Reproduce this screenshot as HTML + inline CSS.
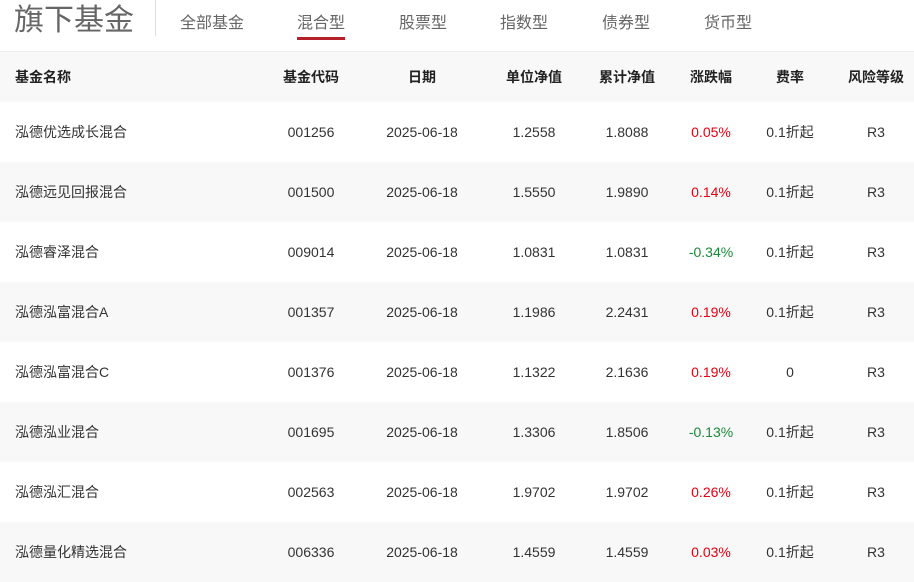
<!DOCTYPE html>
<html><head><meta charset="utf-8"><style>
*{margin:0;padding:0;box-sizing:border-box}
body{width:914px;height:573px;overflow:hidden;background:#fff;font-family:"Liberation Sans","Noto Sans CJK SC",sans-serif;color:#333;position:relative}
.title{position:absolute;left:14px;top:1px;font-size:30px;color:#666;line-height:40px}
.div{position:absolute;left:155px;top:0;width:1px;height:36px;background:#ddd}
.tab{position:absolute;top:13px;font-size:16px;color:#666;line-height:22px}
.ul{position:absolute;left:297px;top:37px;width:48px;height:3px;background:#b5202b}
.hline{position:absolute;left:0;top:51px;width:914px;height:1px;background:#eee}
.row{position:absolute;left:0;width:914px;height:60px;font-size:14px}
.row div{position:absolute;top:0;line-height:60px;text-align:center;transform:translateX(-50%);white-space:nowrap}
.row div.n{transform:none;left:15px;text-align:left}
.g{background:#f8f8f8}
.h{font-weight:bold;color:#222;top:52px;height:50px}
.h div{line-height:50px}
.r{color:#e60012}.gr{color:#1a8a3a}
</style></head><body>
<div class="title">旗下基金</div><div class="div"></div>
<div class="tab" style="left:180px">全部基金</div>
<div class="tab" style="left:297px">混合型</div>
<div class="tab" style="left:399px">股票型</div>
<div class="tab" style="left:500px">指数型</div>
<div class="tab" style="left:602px">债券型</div>
<div class="tab" style="left:704px">货币型</div>
<div class="ul"></div><div class="hline"></div>
<div class="row h g"><div class="n">基金名称</div><div style="left:311px">基金代码</div><div style="left:422px">日期</div><div style="left:534px">单位净值</div><div style="left:627px">累计净值</div><div style="left:711px">涨跌幅</div><div style="left:790px">费率</div><div style="left:876px">风险等级</div></div>
<div class="row" style="top:102px"><div class="n">泓德优选成长混合</div><div style="left:311px">001256</div><div style="left:422px">2025-06-18</div><div style="left:534px">1.2558</div><div style="left:627px">1.8088</div><div class="r" style="left:711px">0.05%</div><div style="left:790px">0.1折起</div><div style="left:876px">R3</div></div>
<div class="row g" style="top:162px"><div class="n">泓德远见回报混合</div><div style="left:311px">001500</div><div style="left:422px">2025-06-18</div><div style="left:534px">1.5550</div><div style="left:627px">1.9890</div><div class="r" style="left:711px">0.14%</div><div style="left:790px">0.1折起</div><div style="left:876px">R3</div></div>
<div class="row" style="top:222px"><div class="n">泓德睿泽混合</div><div style="left:311px">009014</div><div style="left:422px">2025-06-18</div><div style="left:534px">1.0831</div><div style="left:627px">1.0831</div><div class="gr" style="left:711px">-0.34%</div><div style="left:790px">0.1折起</div><div style="left:876px">R3</div></div>
<div class="row g" style="top:282px"><div class="n">泓德泓富混合A</div><div style="left:311px">001357</div><div style="left:422px">2025-06-18</div><div style="left:534px">1.1986</div><div style="left:627px">2.2431</div><div class="r" style="left:711px">0.19%</div><div style="left:790px">0.1折起</div><div style="left:876px">R3</div></div>
<div class="row" style="top:342px"><div class="n">泓德泓富混合C</div><div style="left:311px">001376</div><div style="left:422px">2025-06-18</div><div style="left:534px">1.1322</div><div style="left:627px">2.1636</div><div class="r" style="left:711px">0.19%</div><div style="left:790px">0</div><div style="left:876px">R3</div></div>
<div class="row g" style="top:402px"><div class="n">泓德泓业混合</div><div style="left:311px">001695</div><div style="left:422px">2025-06-18</div><div style="left:534px">1.3306</div><div style="left:627px">1.8506</div><div class="gr" style="left:711px">-0.13%</div><div style="left:790px">0.1折起</div><div style="left:876px">R3</div></div>
<div class="row" style="top:462px"><div class="n">泓德泓汇混合</div><div style="left:311px">002563</div><div style="left:422px">2025-06-18</div><div style="left:534px">1.9702</div><div style="left:627px">1.9702</div><div class="r" style="left:711px">0.26%</div><div style="left:790px">0.1折起</div><div style="left:876px">R3</div></div>
<div class="row g" style="top:522px"><div class="n">泓德量化精选混合</div><div style="left:311px">006336</div><div style="left:422px">2025-06-18</div><div style="left:534px">1.4559</div><div style="left:627px">1.4559</div><div class="r" style="left:711px">0.03%</div><div style="left:790px">0.1折起</div><div style="left:876px">R3</div></div>
</body></html>
